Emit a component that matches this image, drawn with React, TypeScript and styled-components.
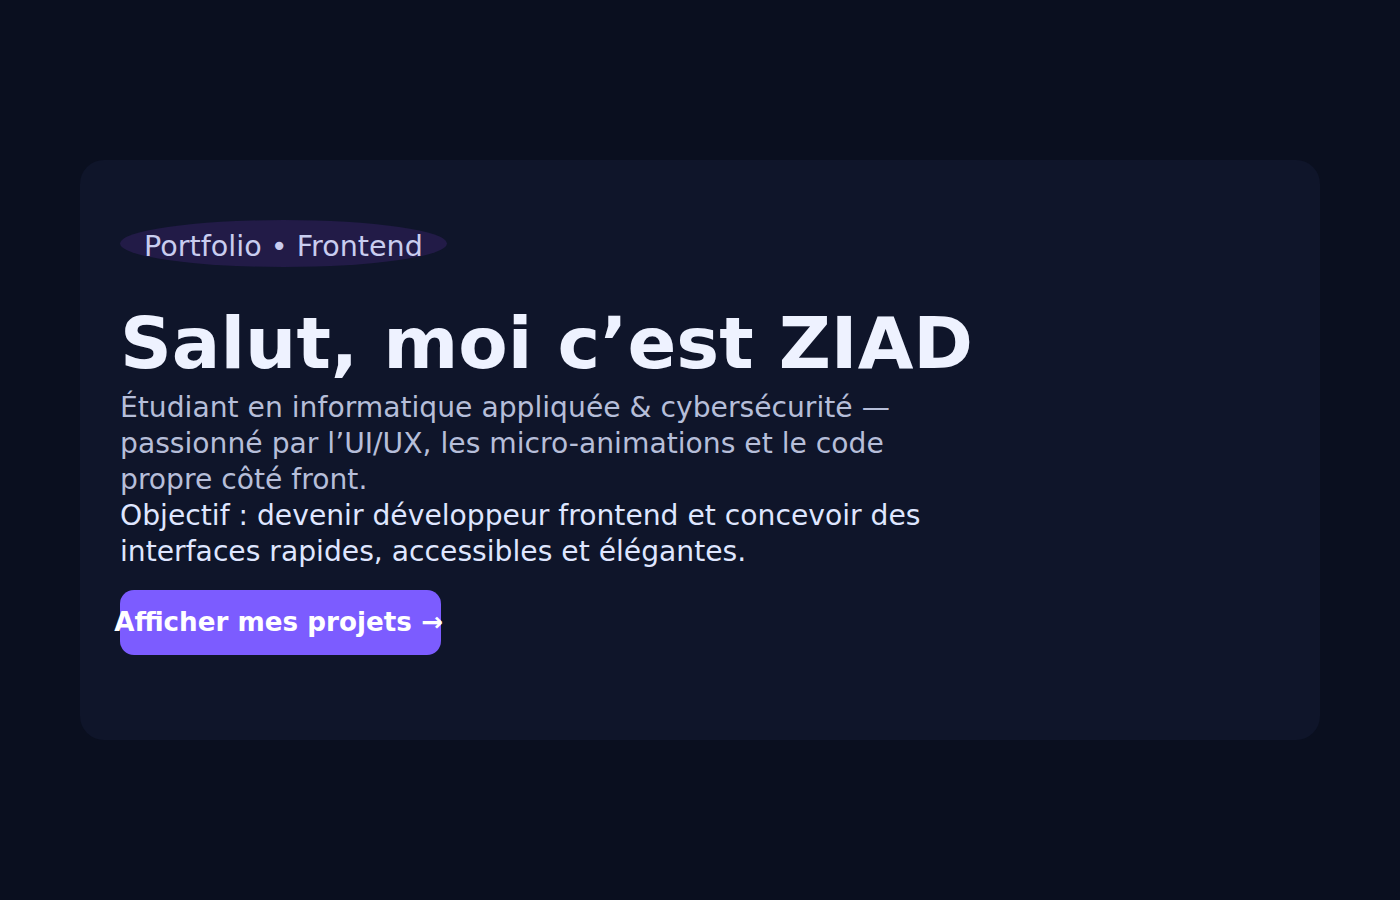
import React from 'react'
import styled, { createGlobalStyle } from 'styled-components'

const GlobalStyle = createGlobalStyle`
  html, body {
    margin: 0;
    padding: 0;
    background: #0a0f1f;
  }
  body {
    font-family: 'DejaVu Sans', 'Liberation Sans', sans-serif;
  }
  * {
    box-sizing: border-box;
  }
`

const Page = styled.main`
  min-height: 100vh;
  display: flex;
  align-items: center;
  padding: 0 80px;
`

const Card = styled.section`
  flex: 1;
  background: #0f152a;
  border-radius: 24px;
  padding: 60px 40px 85px;
`

const Badge = styled.span`
  display: inline-block;
  padding: 10px 24px 4px;
  border-radius: 50%;
  background: #221b47;
  color: #c9cdef;
  font-size: 28.6px;
  line-height: 33px;
`

const Title = styled.h1`
  margin: 37px 0 0;
  color: #eef2ff;
  font-size: 72px;
  font-weight: 700;
  line-height: 1.1;
`

const Intro = styled.p`
  margin: 6px 0 0;
  max-width: 830px;
  color: #b6bed9;
  font-size: 28.2px;
  line-height: 36px;
`

const Goal = styled.span<{ $bright?: boolean }>`
  color: ${({ $bright }) => ($bright ? '#dfe6ff' : 'inherit')};
`

const Cta = styled.button`
  display: flex;
  align-items: center;
  justify-content: center;
  width: 321px;
  height: 65px;
  margin-top: 20px;
  padding: 0 4px 0 0;
  border: none;
  border-radius: 14px;
  background: #7c5cff;
  color: #ffffff;
  font-family: inherit;
  font-size: 26.2px;
  font-weight: 700;
  white-space: nowrap;
  cursor: pointer;
`

const Hero: React.FC = () => (
  <Card>
    <Badge>Portfolio • Frontend</Badge>
    <Title>Salut, moi c’est ZIAD</Title>
    <Intro>
      Étudiant en informatique appliquée &amp; cybersécurité — passionné par l’UI/UX, les
      micro-animations et le code propre côté front.
      <br />
      <Goal $bright>
        Objectif : devenir développeur frontend et concevoir des interfaces rapides,
        accessibles et élégantes.
      </Goal>
    </Intro>
    <Cta>Afficher mes projets →</Cta>
  </Card>
)

export default function App() {
  return (
    <>
      <GlobalStyle />
      <Page>
        <Hero />
      </Page>
    </>
  )
}
